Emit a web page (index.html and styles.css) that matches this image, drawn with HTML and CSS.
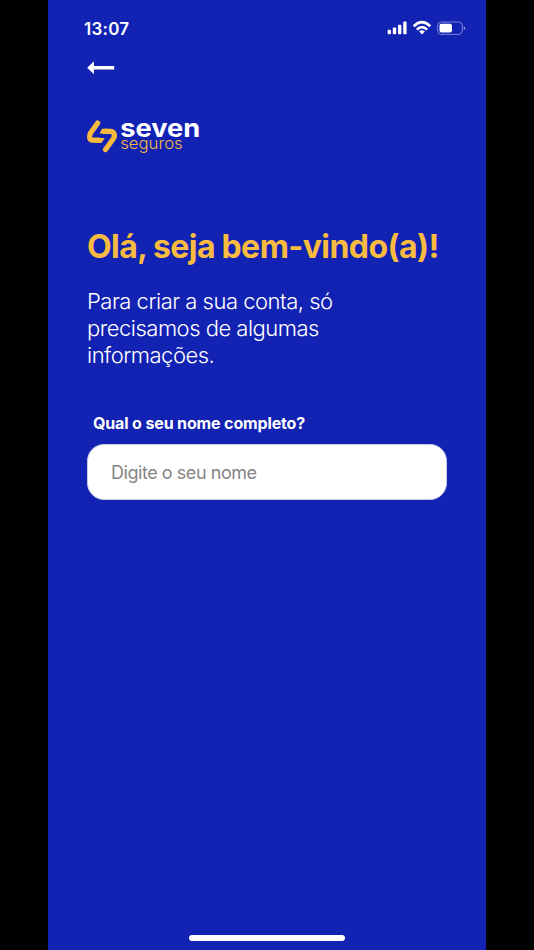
FILE: index.html
```html
<!DOCTYPE html>
<html lang="pt-BR">
<head>
<meta charset="utf-8">
<title>Seven Seguros</title>
<link rel="stylesheet" href="styles.css">
</head>
<body>
<main class="screen">
  <header class="status">
    <span class="time">13:07</span>
    <svg class="indicators" width="80" height="16" viewBox="0 0 80 16" fill="#fff">
      <rect x="0.6" y="9.7" width="3.4" height="4.6" rx="1"/>
      <rect x="5.8" y="7.5" width="3.4" height="6.8" rx="1"/>
      <rect x="11" y="4.8" width="3.4" height="9.5" rx="1"/>
      <rect x="16.2" y="1.6" width="3.4" height="12.7" rx="1"/>
      <g fill="none" stroke="#fff" stroke-width="2.6">
        <path d="M26.7 6.2Q35 -1.8 43.3 6.2"/>
        <path d="M29.8 9.6Q35 4.7 40.2 9.6"/>
      </g>
      <path d="M32.1 11.5Q35 9 37.9 11.5L35 14.5Z"/>
      <rect x="50.7" y="2" width="24.6" height="12.4" rx="3.6" fill="none" stroke="#fff" stroke-opacity=".45"/>
      <rect x="52.5" y="3.8" width="12.5" height="8.8" rx="2"/>
      <path d="M76.8 6.2Q79.8 8.2 76.8 10.2Z" fill-opacity=".55"/>
    </svg>
  </header>
  <svg class="back" width="28" height="14" viewBox="0 0 28 14" role="img" aria-label="Voltar">
    <path d="M0.2 6.7L6.9 0.2V5H27.2V8.4H6.9V13.2Z" fill="#fff"/>
  </svg>
  <svg class="logo" width="116" height="48" viewBox="0 -10 116 48">
    <g fill="none" stroke="#f7b93e" stroke-width="5.2" stroke-linecap="round" stroke-linejoin="round">
      <path d="M10.7 5L3.4 15.2Q1 22.2 6.1 22.2H12"/>
      <path d="M18.5 31.6L26.3 20.8C28.8 17 26.8 13.4 23.3 13.4H17"/>
    </g>
    <path d="M8 24.8H14.7L17.7 20H8ZM21 10.8H15.2L12.4 15.6H21Z" fill="#f7b93e"/>
    <text class="brand" x="33.2" y="18.9" textLength="80" lengthAdjust="spacingAndGlyphs">seven</text>
    <text class="brand-sub" x="33.2" y="31.2" textLength="62.5" lengthAdjust="spacingAndGlyphs">seguros</text>
  </svg>
  <h1 class="title">Olá, seja bem-vindo(a)!</h1>
  <p class="intro">Para criar a sua conta, só<br>precisamos de algumas<br>informações.</p>
  <label class="label" for="name">Qual o seu nome completo?</label>
  <input class="field" id="name" type="text" placeholder="Digite o seu nome">
  <div class="home"></div>
</main>
</body>
</html>
```
FILE: styles.css
```css
* { box-sizing: border-box; }
body {
  margin: 0;
  background: #000;
  font-family: Inter, "Liberation Sans", sans-serif;
}
.screen {
  display: flex;
  flex-direction: column;
  align-items: flex-start;
  width: 438px;
  height: 950px;
  margin: 0 auto;
  padding: 18px 39px 9px;
  background: #1222b3;
  color: #fff;
}
.status {
  display: flex;
  justify-content: space-between;
  align-items: center;
  width: 383px;
  height: 20px;
  margin-left: -3px;
}
.time { font-size: 17px; line-height: 20px; font-weight: 600; letter-spacing: .25px; padding-top: 1px; }
.back { margin-top: 23px; }
.logo { margin-top: 33px; }
.brand { font: 700 25.5px Inter, sans-serif; fill: #fff; }
.brand-sub { font: 300 16.5px Inter, sans-serif; fill: #f7b93e; }
.title {
  margin: 71px 0 0;
  color: #f9bc40;
  font-size: 32px;
  line-height: 40px;
  font-weight: 700;
  letter-spacing: -.55px;
  word-spacing: -.5px;
  white-space: nowrap;
}
.intro {
  margin: 21px 0 0;
  font-size: 22px;
  line-height: 27px;
  font-weight: 350;
  letter-spacing: -.5px;
}
.label {
  margin: 44px 0 0 6px;
  font-size: 16px;
  line-height: 20px;
  font-weight: 700;
  letter-spacing: -.14px;
}
.field {
  width: 360px;
  height: 56px;
  margin-top: 11px;
  padding: 0 23px;
  border: 1px solid #c5c8dd;
  border-radius: 17px;
  background: #fff;
  color: #222;
  font: 400 18px Inter, "Liberation Sans", sans-serif;
  letter-spacing: -.45px;
}
.field::placeholder { color: #858585; opacity: 1; }
.home {
  width: 156px;
  height: 6px;
  margin: auto auto 0;
  border-radius: 3px;
  background: #fff;
}
```
